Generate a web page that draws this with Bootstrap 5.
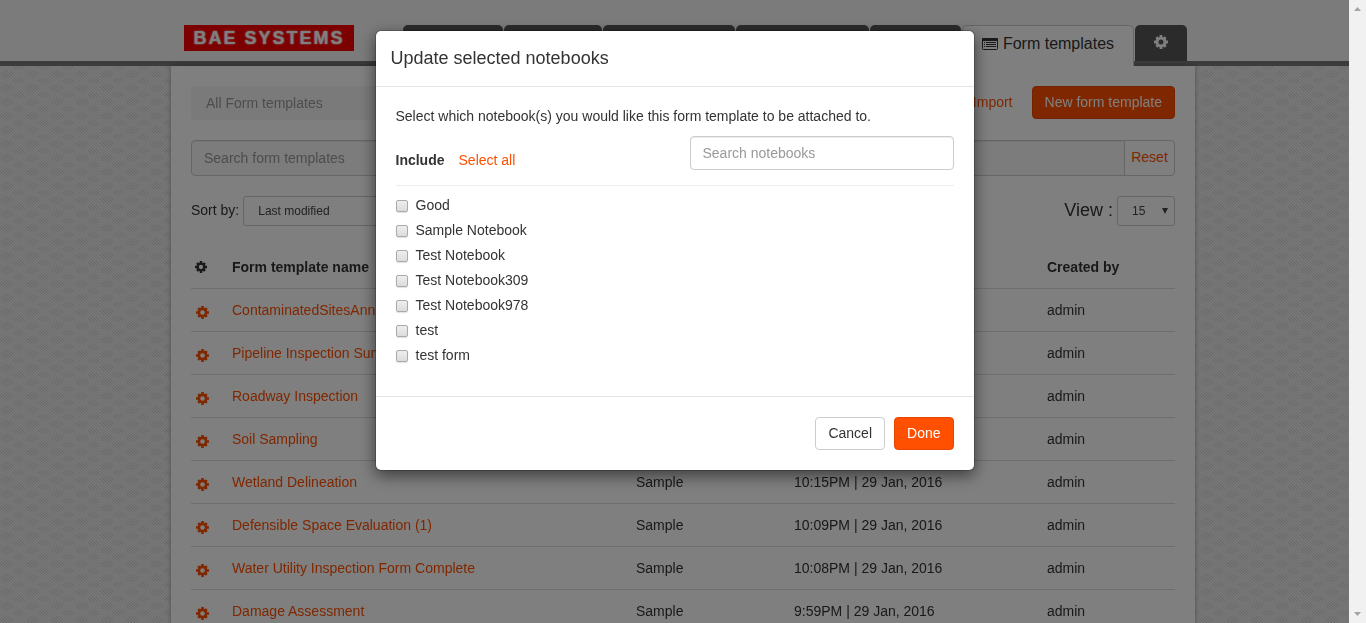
<!DOCTYPE html>
<html lang="en">
<head>
<meta charset="utf-8">
<meta name="viewport" content="width=device-width, initial-scale=1">
<title>Form templates</title>
<link href="https://cdn.jsdelivr.net/npm/bootstrap@5.3.0/dist/css/bootstrap.min.css" rel="stylesheet">
<style>
  :root { --brand: #ff4f00; --line: #ddd; --ink: #333; --rail: 17px; }
  body { font: 14px/20px "Liberation Sans", Arial, sans-serif; color: var(--ink); background: #ececec; height: 100vh; overflow: hidden; }
  a { color: var(--brand); text-decoration: none; }
  .backdrop-pattern { position: fixed; inset: 0; width: 100%; height: 100%; z-index: -1; }
  .site-header { background: #f7f7f7; height: 66px; border-bottom: 5px solid #787878; }
  .wrap { width: 100%; max-width: 1024px; margin: 0 auto; }
  .site-header .wrap { padding: 25px 8px 0 13px; }
  .logo { background: #f90000; color: #fff; width: 170px; height: 26px; font-size: 18px; line-height: 26px; font-weight: 700; letter-spacing: 2px; text-align: center; text-shadow: 0 0 2px #fff; }
  .logo:hover { color: #fff; }
  .tabs { gap: 1px; font-size: 16px; }
  .tabs .tab { height: 36px; background: #575757; border-radius: 5px 5px 0 0; color: #fff; }
  .tabs .tab.active { height: 41px; background: #fff; color: var(--ink); border: 1px solid #ccc; border-bottom: 0; width: 172px; gap: 5px; padding-bottom: 4px; }
  .w-a { width: 100px; } .w-b { width: 98px; } .w-c { width: 132px; } .w-d { width: 133px; } .w-e { width: 91px; } .w-f { width: 52px; padding-bottom: 2px; }
  .sheet { background: #fff; padding: 20px; min-height: 100vh; box-shadow: 0 0 5px rgba(0,0,0,.3); }
  .crumb { background: #f5f5f5; border-radius: 4px; color: #999; padding: 7px 15px; width: 620px; height: 34px; }
  .actions { gap: 19px; }
  .actions a { padding-bottom: 2px; }
  .btn { font-size: 14px; line-height: 20px; padding: 5px 12px 6px; border-radius: 4px; }
  .btn-brand, .btn-brand:hover { background: var(--brand); border-color: #e64700; color: #fff; }
  .btn-plain { background: #fff; border-color: #ccc; color: var(--ink); }
  .form-control { font-size: 14px; line-height: 20px; border-color: #ccc; border-radius: 4px; padding: 6px 12px; box-shadow: inset 0 1px 1px rgba(0,0,0,.075); color: #555; }
  .form-control::placeholder { color: #999; }
  .search { margin-top: 20px; height: 36px; }
  .search .form-control { background: #f9f9f9; }
  .search .btn { width: 51px; padding: 4px 0 6px; color: var(--brand); }
  .sorting { margin-top: 20px; height: 30px; gap: 4px; }
  .sorting label { padding-bottom: 2px; }
  .pick { appearance: none; border: 1px solid #ccc; border-radius: 3px; background: #fff; color: #444; height: 30px; font-size: 12px; padding: 0 14px; }
  .pick-sort { width: 220px; }
  .pick-view { width: 58px; }
  .pick-box { position: relative; }
  .pick-box svg { position: absolute; right: 7px; top: 12px; pointer-events: none; }
  .view-label { font-size: 18px; }
  .listing { margin: 19px 0 0; table-layout: fixed; width: 100%; border-collapse: collapse; }
  .listing th, .listing td { height: 43px; padding: 0; border-bottom: 1px solid var(--line); vertical-align: middle; text-align: left; white-space: nowrap; }
  .listing th { padding-top: 2px; }
  .listing th:first-child { padding-left: 4px; }
  .listing td:first-child { padding: 5px 0 0 5px; }
  .listing svg { display: block; }
  .col-gear { width: 41px; } .col-name { width: 404px; } .col-group { width: 158px; } .col-when { width: 253px; }
  .modal { right: var(--rail); width: auto; background: rgba(0,0,0,.5); }
  .modal-dialog { max-width: 600px; margin: 30px auto; }
  .modal-content { border: 1px solid rgba(0,0,0,.2); border-radius: 6px; box-shadow: 0 5px 15px rgba(0,0,0,.5); background-clip: padding-box; color: var(--ink); }
  .modal-header { padding: 15px; border-color: #e5e5e5; }
  .modal-title { font-size: 18px; line-height: 25px; font-weight: 400; }
  .modal-body { padding: 19px 20px 29px; }
  .modal-footer { padding: 20px; border-color: #e5e5e5; gap: 9px; }
  .modal-footer > * { margin: 0; }
  .finder { width: 264px; height: 34px; }
  .pick-head { margin-top: 10px; padding-bottom: 15px; border-bottom: 1px solid #eee; }
  .pick-intro { gap: 14px; padding-top: 14px; }
  .pick-list { padding-top: 6px; }
  .pick-list label { display: flex; align-items: center; gap: 8px; height: 25px; }
  .tick { appearance: none; width: 12px; height: 12px; margin: 2px 0 0; border: 1px solid #aaa; border-radius: 2px; background: linear-gradient(#eee, #dcdcdc); box-shadow: 0 1px 1px rgba(0,0,0,.12); }
  .tick:checked { background: var(--brand); }
  .rail { position: fixed; top: 0; right: 0; bottom: 0; width: var(--rail); background: #f1f1f1; z-index: 1100; padding: 7px 0; }
</style>
</head>
<body>
<svg class="backdrop-pattern" aria-hidden="true">
  <defs>
    <pattern id="hatch" width="3" height="3" patternUnits="userSpaceOnUse"><path d="M0 0h1v1h1v1h1v1h-1v-1h-1v-1h-1z" fill="#cecece"/></pattern>
    <pattern id="waves" width="25" height="14" patternUnits="userSpaceOnUse">
      <rect width="25" height="14" fill="url(#hatch)" opacity=".3"/>
      <path d="M0 4q7-8 14 0q-7 8-14 0zM12 11q6-7 13 0q-6 6-13 0z" fill="url(#hatch)"/>
    </pattern>
  </defs>
  <rect width="100%" height="100%" fill="url(#waves)"/>
</svg>
<svg width="0" height="0" class="position-absolute" aria-hidden="true">
  <symbol id="gear" viewBox="0 0 14 14">
    <circle cx="7" cy="7" r="3.900" fill="none" stroke="currentColor" stroke-width="2.800"/>
    <g stroke="currentColor" stroke-width="2.800"><path d="M7 0v3M7 11v3M0 7h3M11 7h3"/><path d="M7 .4v3M7 10.600v3M.4 7h3M10.600 7h3" transform="rotate(45 7 7)"/></g>
  </symbol>
</svg>

<header class="site-header">
  <div class="wrap d-flex justify-content-between">
    <a class="logo" href="#">BAE SYSTEMS</a>
    <nav class="tabs d-flex" aria-label="Main">
      <a class="tab w-a" href="#" aria-label="Home"></a>
      <a class="tab w-b" href="#" aria-label="Records"></a>
      <a class="tab w-c" href="#" aria-label="Notebooks"></a>
      <a class="tab w-d" href="#" aria-label="Map layers"></a>
      <a class="tab w-e" href="#" aria-label="Users"></a>
      <a class="tab active d-flex align-items-center justify-content-center" href="#" aria-current="page">
        <svg width="16" height="12" viewBox="0 0 16 12" aria-hidden="true"><rect x=".5" y=".5" width="15" height="11" rx="1" fill="none" stroke="currentColor"/><path fill="currentColor" d="M0 1q0-1 1-1h14q1 0 1 1v2H0zM2 4h1v1H2zM4 4h10v1H4zM2 6h1v1H2zM4 6h10v1H4zM2 8h1v1H2zM4 8h10v1H4z"/></svg>
        Form templates
      </a>
      <a class="tab w-f d-flex align-items-center justify-content-center" href="#" aria-label="Settings"><svg width="14" height="14"><use href="#gear"/></svg></a>
    </nav>
  </div>
</header>

<main class="wrap sheet">
  <div class="d-flex justify-content-between align-items-start">
    <div class="crumb">All Form templates</div>
    <div class="actions d-flex align-items-center">
      <a href="#">Import</a>
      <button type="button" class="btn btn-brand">New form template</button>
    </div>
  </div>

  <form class="input-group search">
    <input class="form-control" type="search" placeholder="Search form templates" aria-label="Search form templates">
    <button type="button" class="btn btn-plain">Reset</button>
  </form>

  <div class="sorting d-flex align-items-center">
    <label for="sort">Sort by:</label>
    <select id="sort" class="pick pick-sort me-auto"><option>Last modified</option></select>
    <label for="view" class="view-label">View :</label>
    <div class="pick-box">
      <select id="view" class="pick pick-view"><option>15</option></select>
      <svg width="6" height="6" viewBox="0 0 6 6" aria-hidden="true"><path d="M0 0h6L3 6z" fill="#444"/></svg>
    </div>
  </div>

  <table class="listing">
    <colgroup><col class="col-gear"><col class="col-name"><col class="col-group"><col class="col-when"><col></colgroup>
    <thead>
      <tr><th aria-label="Actions"><svg width="12" height="12"><use href="#gear"/></svg></th><th>Form template name</th><th>Group</th><th>Last modified</th><th>Created by</th></tr>
    </thead>
    <tbody>
      <tr><td><a href="#" aria-label="Options"><svg width="13" height="13"><use href="#gear"/></svg></a></td><td><a href="#">ContaminatedSitesAnnual</a></td><td>Sample</td><td></td><td>admin</td></tr>
      <tr><td><a href="#" aria-label="Options"><svg width="13" height="13"><use href="#gear"/></svg></a></td><td><a href="#">Pipeline Inspection Survey</a></td><td>Sample</td><td></td><td>admin</td></tr>
      <tr><td><a href="#" aria-label="Options"><svg width="13" height="13"><use href="#gear"/></svg></a></td><td><a href="#">Roadway Inspection</a></td><td>Sample</td><td></td><td>admin</td></tr>
      <tr><td><a href="#" aria-label="Options"><svg width="13" height="13"><use href="#gear"/></svg></a></td><td><a href="#">Soil Sampling</a></td><td>Sample</td><td></td><td>admin</td></tr>
      <tr><td><a href="#" aria-label="Options"><svg width="13" height="13"><use href="#gear"/></svg></a></td><td><a href="#">Wetland Delineation</a></td><td>Sample</td><td>10:15PM | 29 Jan, 2016</td><td>admin</td></tr>
      <tr><td><a href="#" aria-label="Options"><svg width="13" height="13"><use href="#gear"/></svg></a></td><td><a href="#">Defensible Space Evaluation (1)</a></td><td>Sample</td><td>10:09PM | 29 Jan, 2016</td><td>admin</td></tr>
      <tr><td><a href="#" aria-label="Options"><svg width="13" height="13"><use href="#gear"/></svg></a></td><td><a href="#">Water Utility Inspection Form Complete</a></td><td>Sample</td><td>10:08PM | 29 Jan, 2016</td><td>admin</td></tr>
      <tr><td><a href="#" aria-label="Options"><svg width="13" height="13"><use href="#gear"/></svg></a></td><td><a href="#">Damage Assessment</a></td><td>Sample</td><td>9:59PM | 29 Jan, 2016</td><td>admin</td></tr>
    </tbody>
  </table>
</main>

<div class="modal d-block overflow-hidden" role="dialog" aria-modal="true" aria-labelledby="dialogTitle">
  <div class="modal-dialog">
    <div class="modal-content">
      <div class="modal-header"><h4 class="modal-title" id="dialogTitle">Update selected notebooks</h4></div>
      <div class="modal-body">
        <div>Select which notebook(s) you would like this form template to be attached to.</div>
        <div class="pick-head d-flex justify-content-between align-items-start">
          <div class="pick-intro d-flex"><strong>Include</strong><a href="#">Select all</a></div>
          <input type="search" class="form-control finder" placeholder="Search notebooks" aria-label="Search notebooks">
        </div>
        <div class="pick-list">
          <label><input type="checkbox" class="tick">Good</label>
          <label><input type="checkbox" class="tick">Sample Notebook</label>
          <label><input type="checkbox" class="tick">Test Notebook</label>
          <label><input type="checkbox" class="tick">Test Notebook309</label>
          <label><input type="checkbox" class="tick">Test Notebook978</label>
          <label><input type="checkbox" class="tick">test</label>
          <label><input type="checkbox" class="tick">test form</label>
        </div>
      </div>
      <div class="modal-footer">
        <button type="button" class="btn btn-plain">Cancel</button>
        <button type="button" class="btn btn-brand">Done</button>
      </div>
    </div>
  </div>
</div>

<div class="rail d-flex flex-column align-items-center justify-content-between" aria-hidden="true">
  <svg width="7" height="4" viewBox="0 0 7 4"><path d="M0 4L3.500 0 7 4z" fill="#a3a3a3"/></svg>
  <svg width="7" height="4" viewBox="0 0 7 4"><path d="M0 0h7L3.500 4z" fill="#a3a3a3"/></svg>
</div>
<script src="https://cdn.jsdelivr.net/npm/bootstrap@5.3.0/dist/js/bootstrap.bundle.min.js"></script>
</body>
</html>
